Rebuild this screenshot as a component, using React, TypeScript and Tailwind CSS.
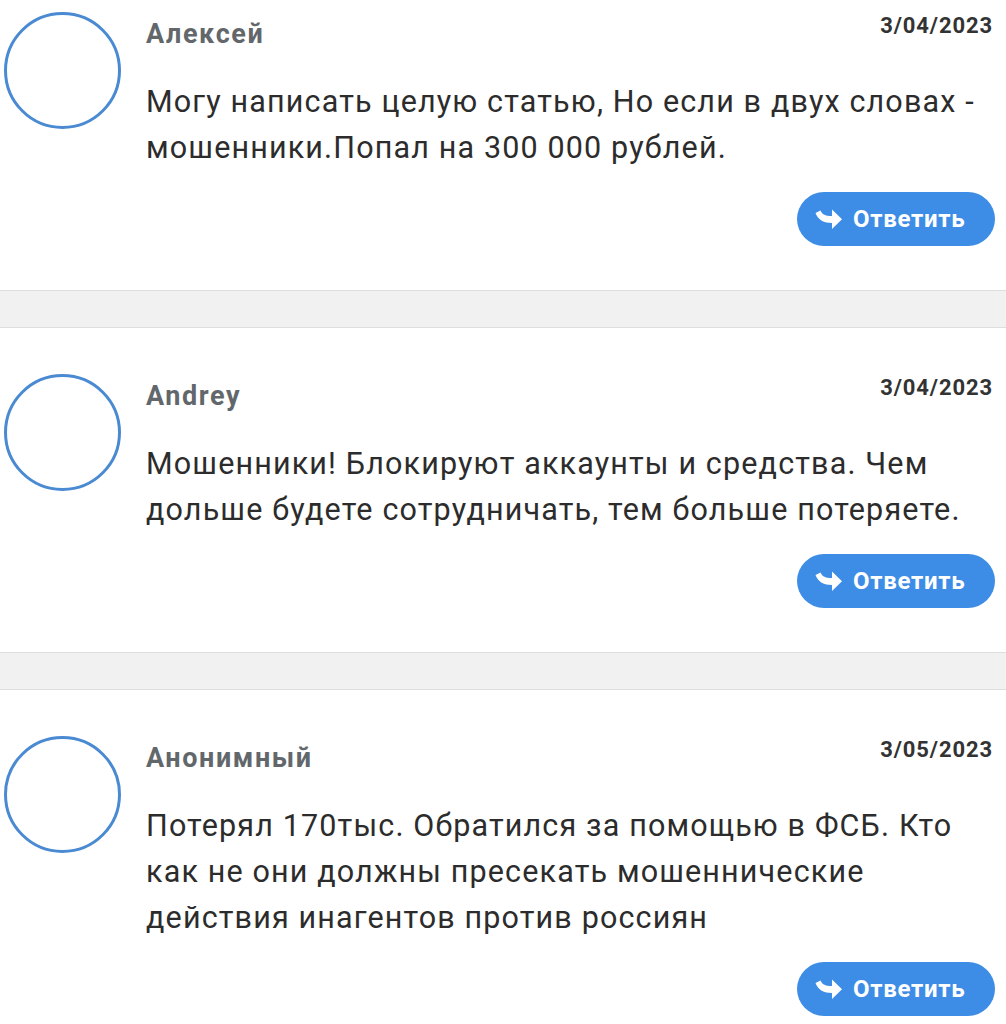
import React from 'react';

interface Review {
  name: string;
  date: string;
  lines: string[];
}

const reviews: Review[] = [
  {
    name: 'Алексей',
    date: '3/04/2023',
    lines: ['Могу написать целую статью, Но если в двух словах -', 'мошенники.Попал на 300 000 рублей.'],
  },
  {
    name: 'Andrey',
    date: '3/04/2023',
    lines: ['Мошенники! Блокируют аккаунты и средства. Чем', 'дольше будете сотрудничать, тем больше потеряете.'],
  },
  {
    name: 'Анонимный',
    date: '3/05/2023',
    lines: [
      'Потерял 170тыс. Обратился за помощью в ФСБ. Кто',
      'как не они должны пресекать мошеннические',
      'действия инагентов против россиян',
    ],
  },
];

function ReplyIcon() {
  return (
    <svg width="28" height="22" viewBox="0 0 28 22" className="shrink-0">
      <path
        d="M0.5 5 L5.5 2.5 C7.5 6.8 10.5 8 17 8 L17 1.5 L27 11.3 L17 21 L17 15 C9 15 3.2 12 0.5 5 Z"
        fill="#ffffff"
      />
    </svg>
  );
}

function ReviewCard({ review, first }: { review: Review; first?: boolean }) {
  return (
    <div className={`flex bg-white pl-[4px] pr-[11px] pb-[44px] ${first ? 'pt-[12px]' : 'pt-[46px]'}`}>
      <div className="w-[117px] h-[117px] shrink-0 rounded-full border-[3.5px] border-[#4a8ad2]" />
      <div className="flex-1 ml-[25px] flex flex-col">
        <div className="flex justify-between items-start h-[38px]">
          <span className="mt-[6px] text-[27px] leading-[32px] font-bold tracking-[1.6px] text-[#62676c]">
            {review.name}
          </span>
          <span className="mt-[1px] mr-[2px] text-[22px] leading-[26px] font-bold tracking-[0.9px] text-[#333333]">
            {review.date}
          </span>
        </div>
        <div className="mt-[29px] text-[30.5px] leading-[46px] tracking-[1.15px] text-[#2c2c2c] whitespace-nowrap">
          {review.lines.map((line, i) => (
            <div key={i}>{line}</div>
          ))}
        </div>
        <div className="flex justify-end mt-[21px]">
          <button className="flex items-center h-[54px] w-[198px] rounded-full bg-[#3d8de6] pl-[18px] gap-[10px]">
            <ReplyIcon />
            <span className="text-[24px] font-bold tracking-[0.7px] text-white leading-none">Ответить</span>
          </button>
        </div>
      </div>
    </div>
  );
}

export default function App() {
  return (
    <div className="w-[1006px] h-[1024px] overflow-hidden bg-white font-['Roboto',sans-serif]">
      {reviews.map((r, i) => (
        <React.Fragment key={i}>
          {i > 0 && <div className="h-[38px] bg-[#f1f1f1] border-y border-[#dedede]" />}
          <ReviewCard review={r} first={i === 0} />
        </React.Fragment>
      ))}
    </div>
  );
}
